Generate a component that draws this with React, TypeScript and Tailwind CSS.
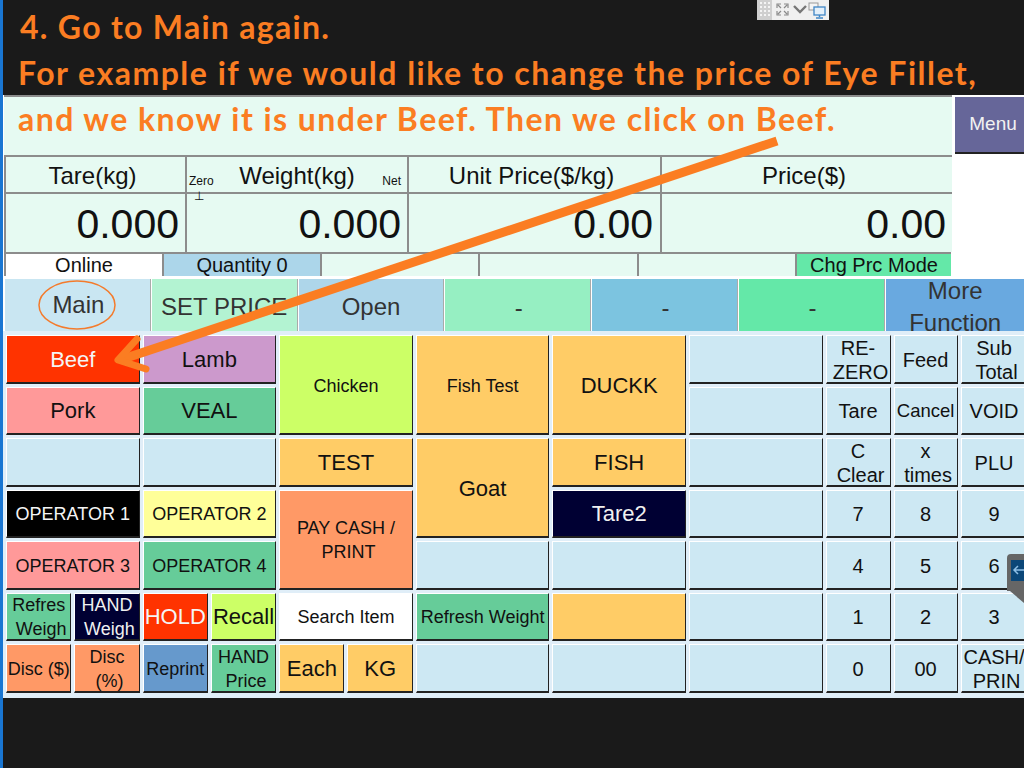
import type { ReactNode } from "react";

const SANS = "font-['Liberation_Sans',Arial,sans-serif]";
const HEADING = "font-['Lato','Open_Sans',sans-serif]";

interface KeyDef {
  lines: string[];
  bg?: string;
  span?: string;
  text?: string;
}

const BLANK = "bg-[#cde8f3]";
const ORANGE = "bg-[#ffcc66]";
const GREEN = "bg-[#66cc99]";
const SALMON = "bg-[#ff9966]";
const PINK = "bg-[#ff9999]";
const LIME = "bg-[#ccff66]";
const NAVY = "bg-[#000033]";
const RED = "bg-[#ff3300]";

const wide = "col-span-2";
const tall = "col-span-2 row-span-2";

const KEYS: KeyDef[] = [
  { lines: ["Beef"], bg: RED, span: wide, text: "text-[22px] text-[#f5f5f5]" },
  { lines: ["Lamb"], bg: "bg-[#cc99cc]", span: wide, text: "text-[22px]" },
  { lines: ["Chicken"], bg: LIME, span: tall, text: "text-[18px]" },
  { lines: ["Fish Test"], bg: ORANGE, span: tall, text: "text-[18px]" },
  { lines: ["DUCKK"], bg: ORANGE, span: tall, text: "text-[22px]" },
  { lines: [], span: wide },
  { lines: ["RE-", "ZERO"] },
  { lines: ["Feed"] },
  { lines: ["Sub", "Total"] },

  { lines: ["Pork"], bg: PINK, span: wide, text: "text-[22px]" },
  { lines: ["VEAL"], bg: GREEN, span: wide, text: "text-[22px]" },
  { lines: [], span: wide },
  { lines: ["Tare"] },
  { lines: ["Cancel"], text: "text-[18.5px]" },
  { lines: ["VOID"] },

  { lines: [], span: wide },
  { lines: [], span: wide },
  { lines: ["TEST"], bg: ORANGE, span: wide, text: "text-[22px]" },
  { lines: ["Goat"], bg: ORANGE, span: tall, text: "text-[22px]" },
  { lines: ["FISH"], bg: ORANGE, span: wide, text: "text-[22px]" },
  { lines: [], span: wide },
  { lines: ["C", "Clear"] },
  { lines: ["x", "times"] },
  { lines: ["PLU"] },

  { lines: ["OPERATOR 1"], bg: "bg-black", span: wide, text: "text-[18px] text-[#f5f5f5]" },
  { lines: ["OPERATOR 2"], bg: "bg-[#ffff99]", span: wide, text: "text-[18px]" },
  { lines: ["PAY CASH /", "PRINT"], bg: SALMON, span: tall, text: "text-[18px]" },
  { lines: ["Tare2"], bg: NAVY, span: wide, text: "text-[22px] text-[#f0f0f0]" },
  { lines: [], span: wide },
  { lines: ["7"] },
  { lines: ["8"] },
  { lines: ["9"] },

  { lines: ["OPERATOR 3"], bg: PINK, span: wide, text: "text-[18px]" },
  { lines: ["OPERATOR 4"], bg: GREEN, span: wide, text: "text-[18px]" },
  { lines: [], span: wide },
  { lines: [], span: wide },
  { lines: [], span: wide },
  { lines: ["4"] },
  { lines: ["5"] },
  { lines: ["6"] },

  { lines: ["Refres", "Weigh"], bg: GREEN, text: "text-[18px]" },
  { lines: ["HAND", "Weigh"], bg: NAVY, text: "text-[18px] text-[#f0f0f0]" },
  { lines: ["HOLD"], bg: RED, text: "text-[22px] text-[#f5f5f5]" },
  { lines: ["Recall"], bg: LIME, text: "text-[22px]" },
  { lines: ["Search Item"], bg: "bg-white", span: wide, text: "text-[18px]" },
  { lines: ["Refresh Weight"], bg: GREEN, span: wide, text: "text-[18px]" },
  { lines: [], bg: ORANGE, span: wide },
  { lines: [], span: wide },
  { lines: ["1"] },
  { lines: ["2"] },
  { lines: ["3"] },

  { lines: ["Disc ($)"], bg: SALMON, text: "text-[18px]" },
  { lines: ["Disc", "(%)"], bg: SALMON, text: "text-[18px]" },
  { lines: ["Reprint"], bg: "bg-[#6699cc]", text: "text-[18px]" },
  { lines: ["HAND", "Price"], bg: GREEN, text: "text-[18px]" },
  { lines: ["Each"], bg: ORANGE, text: "text-[22px]" },
  { lines: ["KG"], bg: ORANGE, text: "text-[22px]" },
  { lines: [], span: wide },
  { lines: [], span: wide },
  { lines: [], span: wide },
  { lines: ["0"] },
  { lines: ["00"] },
  { lines: ["CASH/", "PRIN"] },
];

const TABS = [
  { label: ["Main"], bg: "bg-[#c9e6f2]", pad: "pl-[2px]" },
  { label: ["SET PRICE"], bg: "bg-[#b3f3d2]", pad: "pt-[4px]" },
  { label: ["Open"], bg: "bg-[#aed6ea]", pad: "pt-[4px]" },
  { label: ["-"], bg: "bg-[#96efc2]", pad: "pl-[2px] pt-[6px]" },
  { label: ["-"], bg: "bg-[#7cc4e0]", pad: "pl-[2px] pt-[6px]" },
  { label: ["-"], bg: "bg-[#64e8a8]", pad: "pl-[2px] pt-[6px]" },
  { label: ["More", "Function"], bg: "bg-[#69a9e0]", pad: "pt-[3px] pr-[6px]" },
];

const STATUS = [
  { label: "Online", bg: "bg-white" },
  { label: "Quantity 0", bg: "bg-[#acd6ea]" },
  { label: "", bg: "bg-[#e6faf2]" },
  { label: "", bg: "bg-[#e6faf2]" },
  { label: "", bg: "bg-[#e6faf2]" },
  { label: "Chg Prc Mode", bg: "bg-[#64e8a8]" },
];

function Key({ lines, bg = BLANK, span = "", text = "text-[20px]" }: KeyDef) {
  return (
    <div
      className={`${bg} ${span} ${text} flex flex-col items-center justify-center overflow-hidden whitespace-nowrap border-t border-l border-r border-b-2 border-t-white border-l-white border-r-[#222] border-b-[#222] pt-[2px] leading-[24px]`}
    >
      {lines.map((line, i) => (
        <span key={line} className={i > 0 ? "pl-[5px]" : ""}>
          {line}
        </span>
      ))}
    </div>
  );
}

function Cell({ className, children }: { className: string; children?: ReactNode }) {
  return (
    <div className={`${className} relative flex items-center border-t-2 border-l-2 border-[#8c8c8c]`}>
      {children}
    </div>
  );
}

export default function App() {
  return (
    <div className={`${SANS} relative h-[768px] w-[1024px] overflow-hidden border-l-[3px] border-[#1976d2] bg-[#1a1a1a] text-[#111]`}>
      <header className={`${HEADING} h-[95px] pl-[15px] pt-[4px] text-[32px] font-bold leading-[46px] tracking-[1.5px] text-[#fb7d22]`}>
        <p className="pl-[2px] tracking-[1.3px]">4. Go to Main again.</p>
        <p>For example if we would like to change the price of Eye Fillet,</p>
      </header>

      <div className="h-[602px] bg-white">
        <div className="flex h-[60px]">
          <div className="ml-[1px] w-[948px] border-t-2 border-[#8c8c8c] bg-[#e6faf2] pl-[14px]">
            <p className={`${HEADING} -mt-[1px] text-[32px] font-bold leading-[46px] tracking-[1.45px] text-[#fb7d22]`}>
              and we know it is under Beef. Then we click on Beef.
            </p>
          </div>
          <div className="ml-[3px] flex h-[59px] w-[69px] items-center justify-center border-t-2 border-b-2 border-b-[#222] border-t-white bg-[#666699] pl-[7px] text-[19px] text-[#f2f2f2]">
            Menu
          </div>
        </div>

        <div className="ml-[1px] grid w-[948px] grid-cols-[181px_222px_253px_292px] grid-rows-[37px_60px]">
          <Cell className="justify-center bg-[#e6faf2] pr-[6px] pt-[3px] text-[24px]">Tare(kg)</Cell>
          <Cell className="justify-center bg-[#e6faf2] pt-[3px] text-[24px]">
            <span className="absolute left-[2px] top-[15px] text-[12px]">Zero</span>
            Weight(kg)
            <span className="absolute right-[6px] top-[15px] text-[12px]">Net</span>
          </Cell>
          <Cell className="justify-center bg-[#e6faf2] pr-[6px] pt-[3px] text-[24px]">Unit Price($/kg)</Cell>
          <Cell className="justify-center bg-[#e6faf2] pr-[6px] pt-[3px] text-[24px]">Price($)</Cell>
          <Cell className="justify-end bg-[#e6faf2] pr-[6px] pt-[3px] text-[41px]">0.000</Cell>
          <Cell className="justify-end bg-[#e6faf2] pr-[6px] pt-[3px] text-[41px]">
            <span className="absolute left-[7px] top-[-5px] text-[12px] leading-[14px]">⊥</span>
            0.000
          </Cell>
          <Cell className="justify-end bg-[#e6faf2] pr-[7px] pt-[3px] text-[41px]">0.00</Cell>
          <Cell className="justify-end bg-[#e6faf2] pr-[6px] pt-[3px] text-[41px]">0.00</Cell>
        </div>

        <div className="ml-[1px] grid h-[24px] w-[947px] grid-cols-[158px_158px_158px_159px_158px_156px]">
          {STATUS.map((s, i) => (
            <Cell key={i} className={`${s.bg} justify-center overflow-hidden text-[20px] leading-[22px]`}>
              {s.label}
            </Cell>
          ))}
        </div>

        <div className="mt-[3px] flex h-[52px] w-[1030px] gap-[1px] overflow-hidden pl-[2px] text-[24px] text-[#333]">
          {TABS.map((t, i) => (
            <div
              key={i}
              className={`${t.bg} ${t.pad} flex h-[52px] w-[145.8px] flex-none flex-col items-center justify-center overflow-hidden border-r border-[#aaa] leading-[32px]`}
            >
              {t.label.map((l) => (
                <span key={l}>{l}</span>
              ))}
            </div>
          ))}
        </div>

        <div className="grid h-[367px] grid-cols-[repeat(12,65.3px)_65px_64px_67px] grid-rows-[repeat(7,48.5px)] gap-[3px] bg-[#e0eef8] pl-[3px] pt-[4px]">
          {KEYS.map((k, i) => (
            <Key key={i} {...k} />
          ))}
        </div>
      </div>

      {/* remote session toolbar */}
      <div className="absolute left-[754px] top-0 flex h-[20px] w-[72px] items-center bg-[#f0f0f0]">
        <svg width="72" height="20" viewBox="0 0 72 20">
          <rect width="15" height="20" fill="#cfcfcf" />
          {[3, 7, 11].map((x) =>
            [2, 6, 10, 14].map((y) => (
              <rect key={`${x}-${y}`} x={x} y={y} width="2" height="2" fill="#f4f4f4" />
            ))
          )}
          <path d="M20 8V4h4M31 8V4h-4M20 11v4h4M31 11v4h-4M21 5l3 3M30 5l-3 3M21 14l3-3M30 14l-3-3" fill="none" stroke="#8a8a8a" strokeWidth="1.2" />
          <path d="M37 6l6 6 6-6" fill="none" stroke="#777" strokeWidth="2.4" />
          <rect x="52" y="3" width="9" height="7" fill="#f4f4f4" stroke="#999" />
          <rect x="57" y="7" width="11" height="8" fill="#e4f0fa" stroke="#3f86c6" strokeWidth="1.3" />
          <path d="M62.500 15v2M59 18h7" stroke="#3f86c6" strokeWidth="1.5" />
        </svg>
      </div>

      {/* side pull tab */}
      <svg className="absolute left-[1004px] top-[554px]" width="17" height="50" viewBox="0 0 17 50">
        <path d="M0 4a4 4 0 0 1 4-4h13v49L3 37H0z" fill="#666" />
        <rect x="4" y="6" width="13" height="21" fill="#0b4778" />
        <path d="M17 16H8M11 12l-4 4 4 4" fill="none" stroke="#8fc0e6" strokeWidth="1.5" />
      </svg>

      {/* annotation arrow and circle */}
      <svg className="absolute left-[-3px] top-0" width="1024" height="768" viewBox="0 0 1024 768" fill="none">
        <ellipse cx="77" cy="305" rx="38" ry="24" stroke="#f47b2c" strokeWidth="1.5" />
        <path d="M777 141L120 360" stroke="#fb7d22" strokeWidth="9" />
        <path d="M137 339L118 360L146 369" stroke="#fb7d22" strokeWidth="7" strokeLinecap="round" strokeLinejoin="round" />
      </svg>
    </div>
  );
}
